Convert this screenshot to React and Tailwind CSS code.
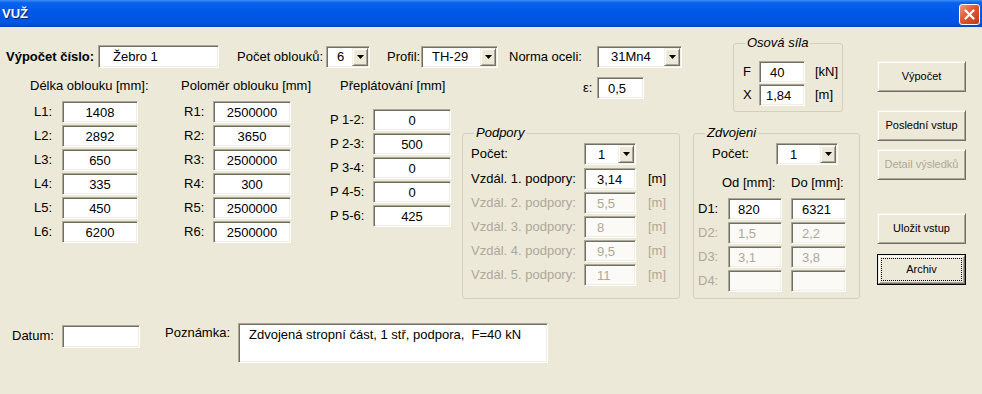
const sunken =
  "border border-t-[#aca899] border-l-[#aca899] border-r-white border-b-white shadow-[inset_1px_1px_0_#716f64,inset_-1px_-1px_0_#f1efe2]";
const raised =
  "border border-t-[#f1efe2] border-l-[#f1efe2] border-r-[#716f64] border-b-[#716f64] shadow-[inset_1px_1px_0_#fff,inset_-1px_-1px_0_#aca899]";

function Edit({ value, className = "", disabled, center }) {
  return (
    <div
      className={`${sunken} flex items-center shrink-0 ${
        disabled ? "bg-[#fbfaf6] text-[#aca899]" : "bg-white text-black"
      } ${center ? "justify-center" : ""} ${className}`}
    >
      <span className="leading-none">{value}</span>
    </div>
  );
}

function Combo({ value, className = "", pad = "pl-[9px]" }) {
  return (
    <div className={`${sunken} bg-white flex items-center justify-between p-[1px] shrink-0 ${className}`}>
      <span className={`leading-none ${pad}`}>{value}</span>
      <div className={`${raised} bg-[#ece9d8] w-[16px] h-full flex items-center justify-center`}>
        <svg width="7" height="4" viewBox="0 0 7 4">
          <path d="M0 0h7L3.5 4z" fill="#000" />
        </svg>
      </div>
    </div>
  );
}

function Group({ title, className = "", children }) {
  return (
    <div className={`relative border border-[#d0d0bf] rounded-[3px] shrink-0 ${className}`}>
      <span className="absolute left-[11px] top-[-9px] px-[2px] bg-[#ece9d8] italic leading-[16px]">
        {title}
      </span>
      {children}
    </div>
  );
}

function Btn({ children, className = "", disabled, focused }) {
  if (focused) {
    return (
      <div className={`border border-black w-[89px] h-[31px] shrink-0 ${className}`}>
        <div className={`${raised} bg-[#ece9d8] w-full h-full p-[2px]`}>
          <div className="w-full h-full border border-dotted border-black flex items-center justify-center text-[11px]">
            {children}
          </div>
        </div>
      </div>
    );
  }
  return (
    <div
      className={`${raised} bg-[#ece9d8] w-[89px] h-[31px] shrink-0 flex items-center justify-center text-[11px] ${
        disabled ? "text-[#aca899]" : "text-black"
      } ${className}`}
    >
      {children}
    </div>
  );
}

const lengths = ["1408", "2892", "650", "335", "450", "6200"];
const radii = ["2500000", "3650", "2500000", "300", "2500000", "2500000"];
const overlaps = [
  ["P 1-2:", "0"],
  ["P 2-3:", "500"],
  ["P 3-4:", "0"],
  ["P 4-5:", "0"],
  ["P 5-6:", "425"],
];
const supports = ["3,14", "5,5", "8", "9,5", "11"];
const doubles = [
  ["D1:", "820", "6321", false],
  ["D2:", "1,5", "2,2", true],
  ["D3:", "3,1", "3,8", true],
  ["D4:", "", "", true],
];

export default function App() {
  return (
    <div className="w-[982px] h-[394px] bg-[#ece9d8] overflow-hidden whitespace-nowrap font-['Liberation_Sans',Arial,sans-serif] text-[13px] text-black">
      {/* title bar */}
      <div className="h-[27px] flex items-start justify-between bg-[linear-gradient(#3d8ef7_0%,#0a62ec_10%,#0058e6_45%,#0054e0_85%,#0046c8_100%)]">
        <span className="ml-[2px] mt-[6px] text-white font-bold text-[13px] leading-[16px] [text-shadow:1px_1px_0_#0a246a]">
          VUŽ
        </span>
        <div className="mt-[4px] mr-[2px] w-[21px] h-[21px] rounded-[3px] border border-white bg-[linear-gradient(135deg,#f09a7c_0%,#e0572f_45%,#c23a16_100%)] flex items-center justify-center">
          <svg width="11" height="11" viewBox="0 0 11 11">
            <path d="M1.5 1.5l8 8M9.5 1.5l-8 8" stroke="#fff" strokeWidth="2.2" strokeLinecap="round" />
          </svg>
        </div>
      </div>

      <div className="flex">
        {/* LEFT PART */}
        <div className="w-[693px] shrink-0 flex flex-col">
          <div className="mt-[18px] h-[23px] flex items-center">
            <span className="ml-[6px] w-[92px] shrink-0 font-bold">Výpočet číslo:</span>
            <Edit value="Žebro 1" className="w-[121px] h-[23px] pl-[14px]" />
            <span className="ml-[18px] w-[89px] shrink-0">Počet oblouků:</span>
            <Combo value="6" className="w-[44px] h-[22px]" />
            <span className="ml-[17px] w-[34px] shrink-0">Profil:</span>
            <Combo value="TH-29" className="w-[77px] h-[22px]" />
            <span className="ml-[11px] w-[88px] shrink-0">Norma oceli:</span>
            <Combo value="31Mn4" className="w-[85px] h-[22px]" pad="pl-[12px]" />
          </div>

          <div className="flex">
            {/* L column */}
            <div className="ml-[30px] w-[108px] shrink-0 flex flex-col">
              <div className="mt-[10px] h-[16px] leading-[16px]">Délka oblouku [mm]:</div>
              <div className="mt-[7px] flex flex-col gap-[2px]">
                {lengths.map((v, i) => (
                  <div key={i} className="flex items-center h-[22px]">
                    <span className="w-[32px] shrink-0 pl-[4px]">L{i + 1}:</span>
                    <Edit value={v} center className="w-[76px] h-[22px]" />
                  </div>
                ))}
              </div>
            </div>

            {/* R column */}
            <div className="ml-[43px] w-[110px] shrink-0 flex flex-col">
              <div className="mt-[10px] h-[16px] leading-[16px]">Poloměr oblouku [mm]</div>
              <div className="mt-[7px] flex flex-col gap-[2px]">
                {radii.map((v, i) => (
                  <div key={i} className="flex items-center h-[22px]">
                    <span className="w-[32px] shrink-0 pl-[3px]">R{i + 1}:</span>
                    <Edit value={v} center className="w-[78px] h-[22px]" />
                  </div>
                ))}
              </div>
            </div>

            {/* P column */}
            <div className="ml-[39px] w-[121px] shrink-0 flex flex-col">
              <div className="mt-[10px] h-[16px] leading-[16px] pl-[10px]">Přeplátování [mm]</div>
              <div className="mt-[15px] flex flex-col gap-[2px]">
                {overlaps.map(([l, v]) => (
                  <div key={l} className="flex items-center h-[22px]">
                    <span className="w-[43px] shrink-0">{l}</span>
                    <Edit value={v} center className="w-[78px] h-[22px]" />
                  </div>
                ))}
              </div>
            </div>

            {/* epsilon + Podpory */}
            <div className="ml-[11px] w-[218px] shrink-0 flex flex-col">
              <div className="mt-[9px] h-[22px] flex items-center pl-[121px]">
                <span className="w-[14px] shrink-0">ε:</span>
                <Edit value="0,5" className="w-[47px] h-[22px] pl-[10px]" />
              </div>
              <Group title="Podpory" className="mt-[34px] w-[218px] h-[166px]">
                <div className="pt-[9px] flex flex-col">
                  <div className="flex items-center h-[22px]">
                    <span className="w-[121px] shrink-0 pl-[8px]">Počet:</span>
                    <Combo value="1" className="w-[52px] h-[22px]" pad="pl-[12px]" />
                  </div>
                  <div className="mt-[3px] flex flex-col gap-[2px]">
                    {supports.map((v, i) => {
                      const off = i > 0;
                      return (
                        <div key={i} className={`flex items-center h-[22px] ${off ? "text-[#aca899]" : ""}`}>
                          <span className="w-[121px] shrink-0 pl-[8px]">Vzdál. {i + 1}. podpory:</span>
                          <Edit value={v} disabled={off} className="w-[52px] h-[22px] pl-[12px]" />
                          <span className="ml-[12px]">[m]</span>
                        </div>
                      );
                    })}
                  </div>
                </div>
              </Group>
            </div>
          </div>
        </div>

        {/* RIGHT PART */}
        <div className="w-[167px] shrink-0 flex flex-col">
          <Group title="Osová síla" className="ml-[40px] mt-[16px] w-[110px] h-[69px]">
            <div className="pt-[17px] flex flex-col gap-[1px]">
              <div className="flex items-center h-[22px]">
                <span className="w-[25px] shrink-0 pl-[9px]">F</span>
                <Edit value="40" className="w-[46px] h-[22px] pl-[10px]" />
                <span className="ml-[10px]">[kN]</span>
              </div>
              <div className="flex items-center h-[22px]">
                <span className="w-[25px] shrink-0 pl-[9px]">X</span>
                <Edit value="1,84" className="w-[46px] h-[22px] pl-[6px]" />
                <span className="ml-[10px]">[m]</span>
              </div>
            </div>
          </Group>

          <Group title="Zdvojeni" className="mt-[21px] w-[167px] h-[166px]">
            <div className="pt-[9px] flex flex-col">
              <div className="flex items-center h-[22px]">
                <span className="w-[82px] shrink-0 pl-[18px]">Počet:</span>
                <Combo value="1" className="w-[62px] h-[22px]" pad="pl-[12px]" />
              </div>
              <div className="mt-[10px] h-[16px] leading-[16px] flex pl-[28px]">
                <span className="w-[69px] shrink-0">Od [mm]:</span>
                <span>Do [mm]:</span>
              </div>
              <div className="mt-[7px] flex flex-col gap-[2px]">
                {doubles.map(([l, a, b, off]) => (
                  <div key={l} className="flex items-center h-[22px]">
                    <span className={`w-[34px] shrink-0 pl-[4px] ${off ? "text-[#aca899]" : ""}`}>{l}</span>
                    <Edit value={a} disabled={off} className="w-[54px] h-[22px] pl-[9px]" />
                    <Edit value={b} disabled={off} className="ml-[9px] w-[55px] h-[22px] pl-[10px]" />
                  </div>
                ))}
              </div>
            </div>
          </Group>
        </div>

        {/* BUTTONS */}
        <div className="ml-[17px] flex flex-col">
          <Btn className="mt-[34px]">Výpočet</Btn>
          <Btn className="mt-[18px]">Poslední vstup</Btn>
          <Btn className="mt-[8px]" disabled>Detail výsledků</Btn>
          <Btn className="mt-[33px]">Uložit vstup</Btn>
          <Btn className="mt-[10px]" focused>Archiv</Btn>
        </div>
      </div>

      {/* bottom row */}
      <div className="mt-[24px] flex items-start">
        <span className="ml-[12px] w-[50px] shrink-0 mt-[5px] leading-[16px]">Datum:</span>
        <Edit value="" className="mt-[2px] w-[78px] h-[23px]" />
        <span className="ml-[25px] w-[73px] shrink-0 mt-[2px] leading-[16px]">Poznámka:</span>
        <div className={`${sunken} bg-white w-[310px] h-[40px] pl-[10px] pt-[3px] leading-[16px]`}>
          Zdvojená stropní část, 1 stř, podpora,&nbsp; F=40 kN
        </div>
      </div>
    </div>
  );
}
